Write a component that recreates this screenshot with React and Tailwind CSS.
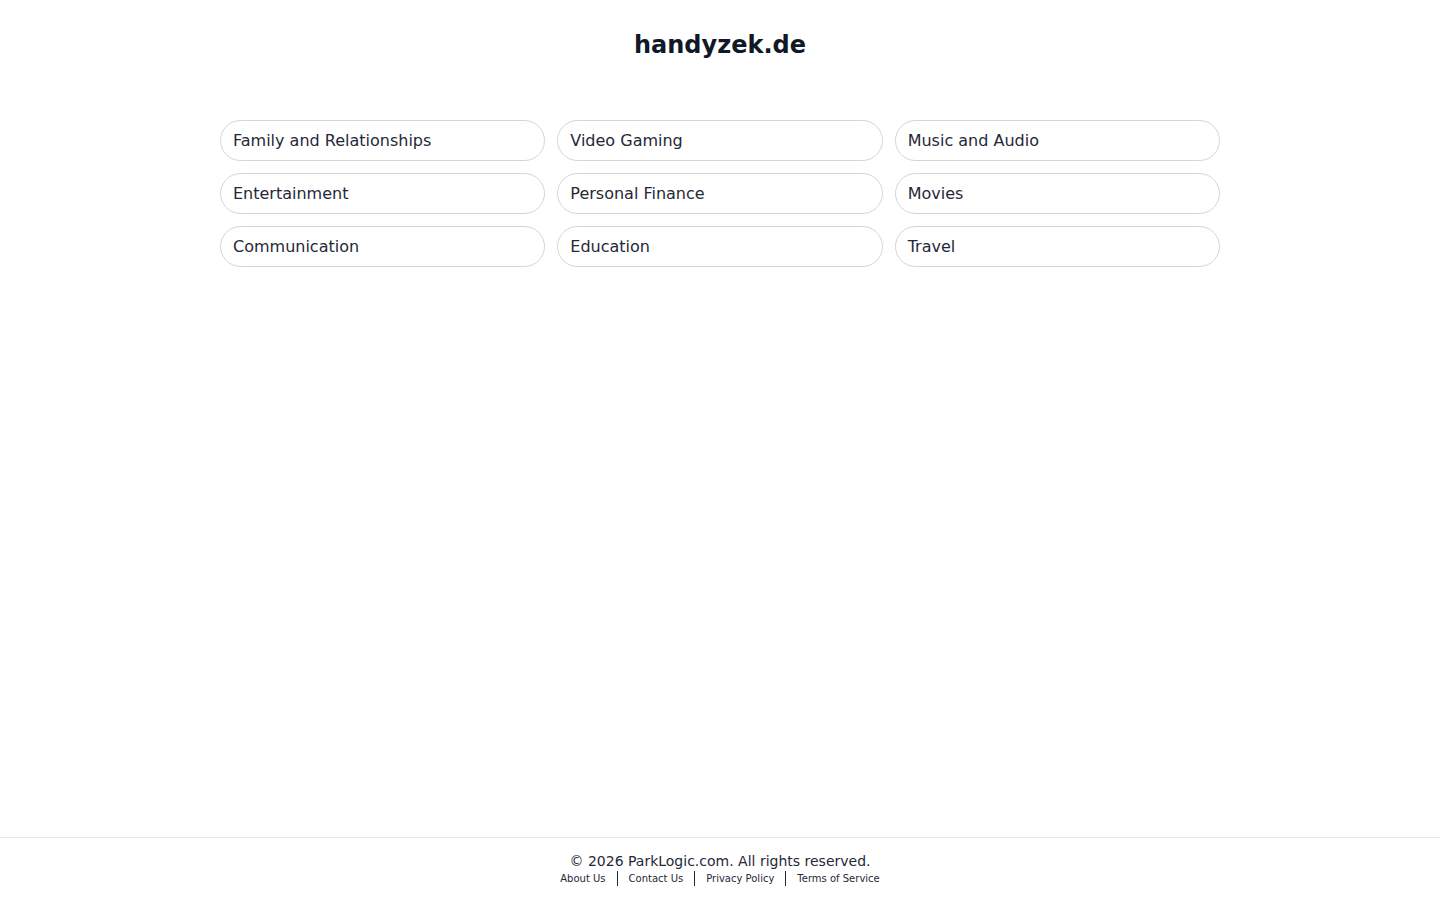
export default function App() {
  const items = [
    "Family and Relationships",
    "Video Gaming",
    "Music and Audio",
    "Entertainment",
    "Personal Finance",
    "Movies",
    "Communication",
    "Education",
    "Travel",
  ];
  return (
    <div
      className="min-h-screen flex flex-col bg-white text-[#111827]"
      style={{ fontFamily: '"DejaVu Sans", sans-serif' }}
    >
      <main className="flex-1">
        <h1 className="text-center text-[24px] font-bold leading-[32px] pt-[29px] text-[#111827]">
          handyzek.de
        </h1>
        <div className="mx-auto w-[1000px] mt-[59px] grid grid-cols-3 gap-x-[12px] gap-y-[12px]">
          {items.map((t) => (
            <a
              key={t}
              href="#"
              className="h-[41px] pt-[1px] flex items-center rounded-full border border-[#d1d5db] px-[12px] text-[16px] text-[#1f2937]"
            >
              {t}
            </a>
          ))}
        </div>
      </main>
      <footer className="border-t border-[#e5e7eb] h-[63px] pt-[14px] text-center">
        <div className="text-[14px] leading-[18px] text-[#1f2937]">
          © 2026 ParkLogic.com. All rights reserved.
        </div>
        <div className="flex justify-center items-center text-[10px] leading-[14px] text-[#1f2937] mt-[1px]">
          <a href="#">About Us</a>
          <span className="mx-[11px] h-[15px] w-px bg-[#1f2937]"></span>
          <a href="#">Contact Us</a>
          <span className="mx-[11px] h-[15px] w-px bg-[#1f2937]"></span>
          <a href="#">Privacy Policy</a>
          <span className="mx-[11px] h-[15px] w-px bg-[#1f2937]"></span>
          <a href="#">Terms of Service</a>
        </div>
      </footer>
    </div>
  );
}
